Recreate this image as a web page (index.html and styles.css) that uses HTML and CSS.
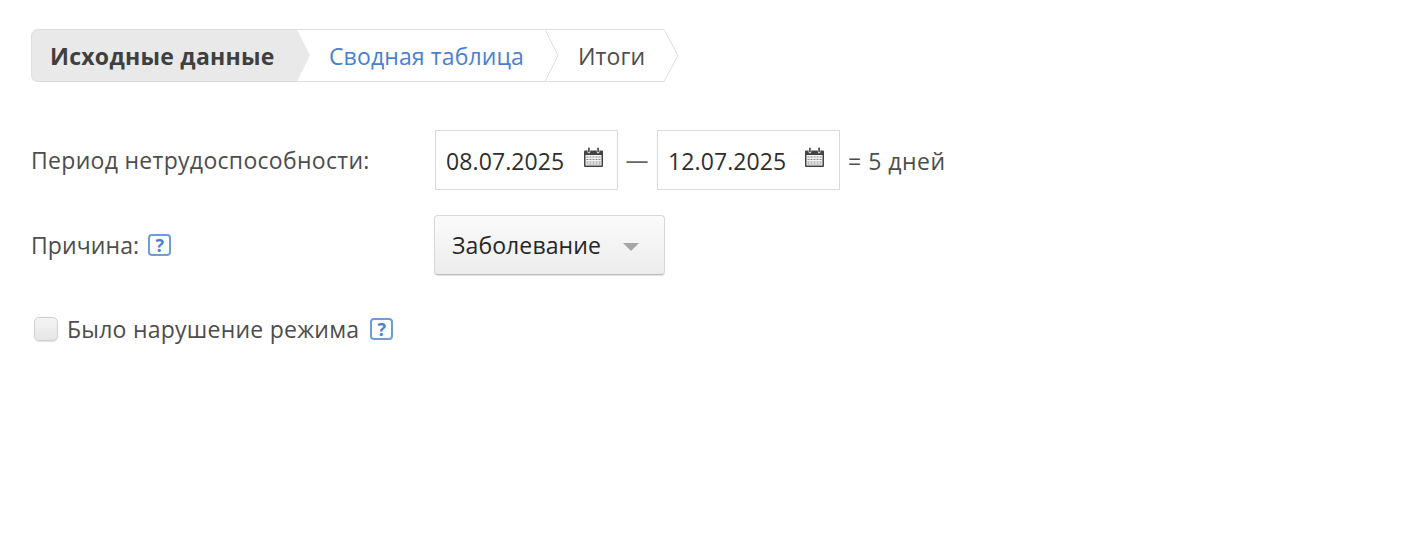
FILE: index.html
```html
<!DOCTYPE html>
<html lang="ru">
<head>
<meta charset="utf-8">
<title>Больничный</title>
<link rel="stylesheet" href="styles.css">
</head>
<body>
<svg class="defs" width="0" height="0" aria-hidden="true">
  <symbol id="cal" viewBox="0 0 21 21">
    <path fill="#444" d="M1 4.500a1 1 0 0 1 1-1h2.600v1.400a1.300 1.300 0 0 0 2.600 0V3.500h6.600v1.400a1.300 1.300 0 0 0 2.600 0V3.500H19a1 1 0 0 1 1 1V19a1 1 0 0 1-1 1H2a1 1 0 0 1-1-1z"/>
    <rect x="5.100" y="0.500" width="1.600" height="5" rx=".8" fill="#444"/>
    <rect x="14.300" y="0.500" width="1.600" height="5" rx=".8" fill="#444"/>
    <rect x="2.500" y="8" width="16" height="10.500" fill="#f4f4f4"/>
    <path stroke="#8a8a8a" stroke-width="1" stroke-dasharray="2 1" fill="none" d="M3.500 10h14M3.500 12.500h14M3.500 15h14M3.500 17h14"/>
  </symbol>
</svg>

<nav class="wizard">
  <a class="step step-active">Исходные данные
    <svg class="tip" viewBox="0 0 14 53" width="14" height="53"><path d="M0 .5 13 26.500 0 52.500z" fill="#e9e9e9"/></svg>
  </a>
  <a class="step step-link">Сводная таблица
    <svg class="tip" viewBox="0 0 14 53" width="14" height="53"><path d="M0 .5 13 26.500 0 52.500" fill="#fff" stroke="#dedede"/></svg>
  </a>
  <a class="step step-last">Итоги
    <svg class="tip" viewBox="0 0 15 53" width="15" height="53"><path d="M0 .5 14 26.500 0 52.500" fill="#fff" stroke="#dedede"/></svg>
  </a>
</nav>

<div class="row row-period">
  <label class="label">Период нетрудоспособности:</label>
  <div class="field date"><span>08.07.2025</span><svg class="cal"><use href="#cal"/></svg></div>
  <span class="dash">—</span>
  <div class="field date"><span>12.07.2025</span><svg class="cal"><use href="#cal"/></svg></div>
  <span class="result">= 5 дней</span>
</div>

<div class="row row-reason">
  <label class="label label-help">Причина: <span class="help">?</span></label>
  <button class="select" type="button">Заболевание<i class="caret"></i></button>
</div>

<div class="row row-check">
  <span class="check"></span>
  <span class="check-text">Было нарушение режима</span>
  <span class="help">?</span>
</div>
</body>
</html>
```
FILE: styles.css
```css
html, body { margin: 0; background: #fff; }
body {
  padding: 29px 31px 0;
  font-family: "Open Sans", sans-serif;
  font-size: 23px;
  line-height: 30px;
  color: #4d4d4d;
  height: 557px;
  box-sizing: border-box;
  overflow: hidden;
}
.defs { position: absolute; }

.wizard {
  display: inline-flex;
  height: 53px;
  box-sizing: border-box;
}
.step {
  position: relative;
  display: flex;
  align-items: center;
  box-sizing: border-box;
  height: 53px;
  border-top: 1px solid #dedede;
  border-bottom: 1px solid #dedede;
  white-space: nowrap;
}
.tip { position: absolute; top: -1px; left: 100%; z-index: 1; overflow: visible; }
.step-active {
  width: 266px;
  padding-left: 18px;
  background: #e9e9e9;
  border-left: 1px solid #dedede;
  border-radius: 7px 0 0 7px;
  font-weight: 700;
  letter-spacing: .27px;
  color: #3f3f3f;
}
.step-link { width: 248px; padding-left: 32px; letter-spacing: .13px; color: #4a7fd0; }
.step-last { width: 119px; padding-left: 33px; letter-spacing: .1px; color: #4d4d4d; }

.row { display: flex; align-items: center; }
.label { display: block; width: 403px; flex: none; letter-spacing: .3px; }
.label-help { display: flex; align-items: center; letter-spacing: .1px; }
.row-period { margin-top: 48px; height: 60px; }
.row-reason { margin-top: 25px; height: 60px; }
.row-check { margin-top: 39px; height: 30px; }

.field {
  display: flex;
  align-items: center;
  box-sizing: border-box;
  width: 183px;
  height: 60px;
  margin-left: 1px;
  padding: 1px 13px 0 10px;
  border: 1px solid #d9d9d9;
  color: #2e2e2e;
  justify-content: space-between;
  letter-spacing: .1px;
}
.field + .dash + .field { padding-right: 14px; }
.cal { width: 21px; height: 21px; margin-top: -6px; }
.dash { width: 38px; text-align: center; color: #666; }
.result { margin-left: 8px; letter-spacing: .5px; padding-top: 1px; }

.select {
  display: flex;
  align-items: center;
  box-sizing: border-box;
  width: 231px;
  height: 60px;
  padding: 0 0 0 17px;
  border: 1px solid #d8d8d8;
  border-bottom-color: #bdbdbd;
  border-radius: 4px;
  background: linear-gradient(#fbfbfb, #ececec);
  box-shadow: 0 1px 1px rgba(0,0,0,.12);
  font: inherit;
  letter-spacing: .1px;
  color: #262626;
}
.caret {
  margin: 3px 0 0 22px;
  width: 0;
  height: 0;
  border-left: 8px solid transparent;
  border-right: 8px solid transparent;
  border-top: 8px solid #a6a6a6;
}

.help {
  display: inline-flex;
  align-items: center;
  justify-content: center;
  box-sizing: border-box;
  width: 23px;
  height: 22px;
  margin-left: 9px;
  border: 2px solid #6d9ddb;
  border-radius: 4px;
  font-size: 18px;
  line-height: 1;
  font-weight: 700;
  letter-spacing: 0;
  color: #4a7fd0;
}
.row-check .help { margin-left: 11px; }
.label-help .help { margin-left: 9px; }

.check {
  box-sizing: border-box;
  width: 24px;
  height: 24px;
  margin: 0 9px 0 3px;
  border: 1px solid #cfcfcf;
  border-radius: 5px;
  background: linear-gradient(#f4f4f4, #e6e6e6);
  box-shadow: 0 1px 1px rgba(0,0,0,.12);
}
.check-text { letter-spacing: .24px; }
```
